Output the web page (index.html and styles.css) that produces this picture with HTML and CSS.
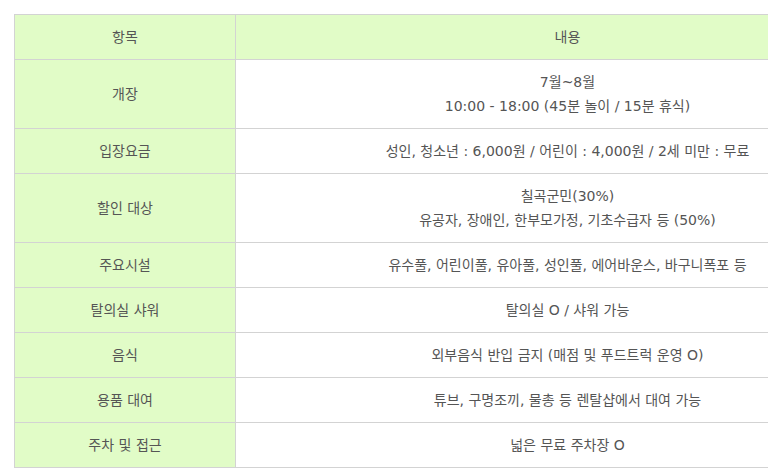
FILE: index.html
```html
<!DOCTYPE html>
<html lang="ko">
<head>
<meta charset="utf-8">
<link rel="stylesheet" href="styles.css">
</head>
<body>
<div class="wrap">
<table class="info">
  <colgroup><col class="c1"><col class="c2"></colgroup>
  <thead>
    <tr><th>항목</th><th class="hd2">내용</th></tr>
  </thead>
  <tbody>
    <tr><th>개장</th><td>7월~8월<br>10:00 - 18:00 (45분 놀이 / 15분 휴식)</td></tr>
    <tr><th>입장요금</th><td>성인, 청소년 : 6,000원 / 어린이 : 4,000원 / 2세 미만 : 무료</td></tr>
    <tr><th>할인 대상</th><td>칠곡군민(30%)<br>유공자, 장애인, 한부모가정, 기초수급자 등 (50%)</td></tr>
    <tr><th>주요시설</th><td>유수풀, 어린이풀, 유아풀, 성인풀, 에어바운스, 바구니폭포 등</td></tr>
    <tr><th>탈의실 샤워</th><td>탈의실 O / 샤워 가능</td></tr>
    <tr><th>음식</th><td>외부음식 반입 금지 (매점 및 푸드트럭 운영 O)</td></tr>
    <tr><th>용품 대여</th><td>튜브, 구명조끼, 물총 등 렌탈샵에서 대여 가능</td></tr>
    <tr><th>주차 및 접근</th><td>넓은 무료 주차장 O</td></tr>
  </tbody>
</table>
</div>
</body>
</html>
```
FILE: styles.css
```css
html, body {
  margin: 0;
  padding: 0;
  background: #fff;
  overflow: hidden;
}
body {
  font-family: "DejaVu Sans", "Noto Sans CJK KR", sans-serif;
  color: #555;
  font-size: 14px;
}
.wrap {
  padding: 14px 0 0 14px;
  width: 886px;
}
.info {
  width: 886px;
  border-collapse: collapse;
  table-layout: fixed;
}
.c1 { width: 221px; }
.info th, .info td {
  border: 1px solid #d3d3d3;
  padding: 10px 8px;
  line-height: 24px;
  text-align: center;
  font-weight: normal;
  vertical-align: middle;
}
.info th {
  background: #e1fcc7;
}
.info td {
  background: #fff;
}
```
